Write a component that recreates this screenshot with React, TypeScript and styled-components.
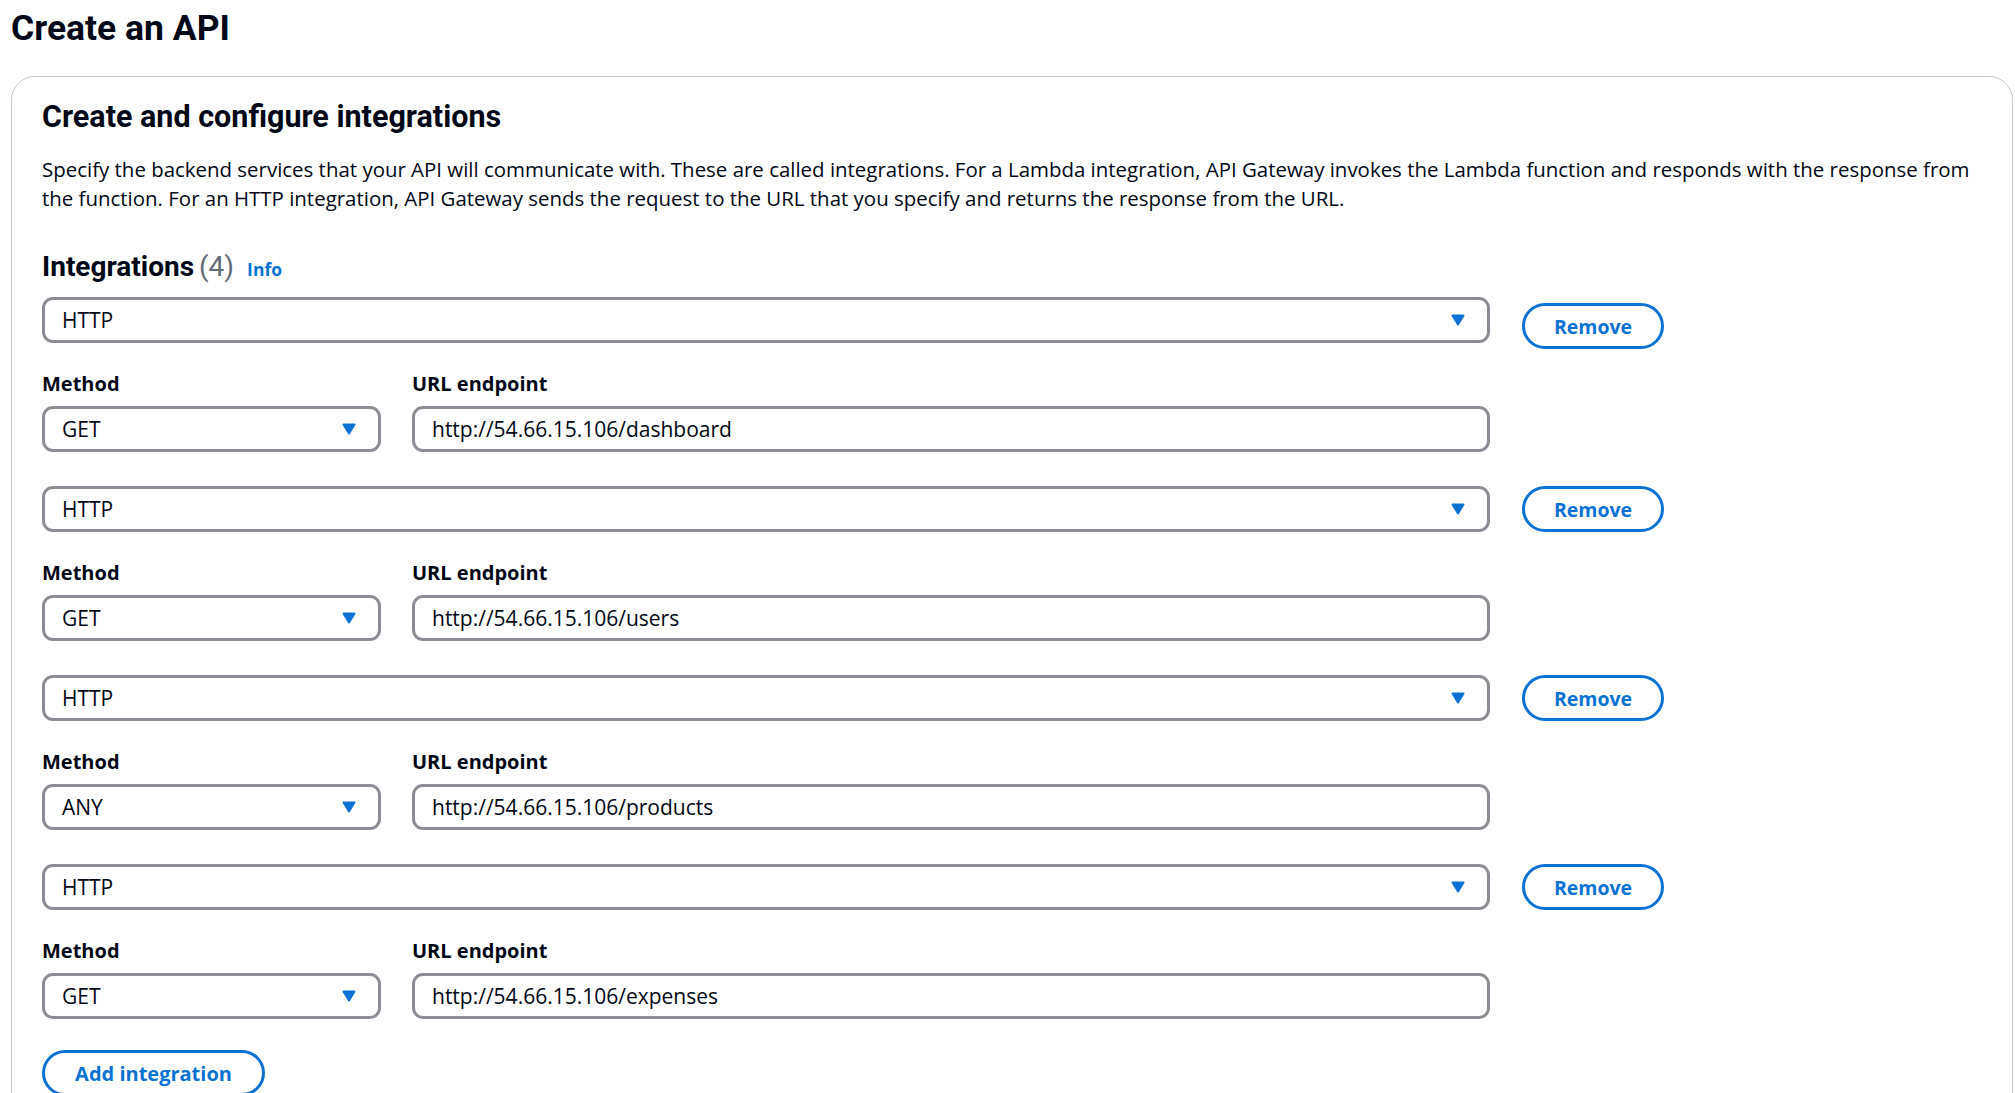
import React from "react";
import styled, { createGlobalStyle } from "styled-components";

const HEADING_FONT = `Roboto, "Liberation Sans", Arial, sans-serif`;
const BODY_FONT = `"Open Sans", "Noto Sans", "Liberation Sans", Arial, sans-serif`;

const GlobalStyle = createGlobalStyle`
  html, body {
    margin: 0;
    padding: 0;
    background: #ffffff;
    overflow: hidden;
  }
  body {
    font-family: ${BODY_FONT};
    color: #000716;
    -webkit-font-smoothing: antialiased;
  }
  * { box-sizing: border-box; }
`;

const Page = styled.div`
  padding: 7px 2px 0 11px;
`;

const Title = styled.h1`
  margin: 0 0 26px 0;
  font-family: ${HEADING_FONT};
  font-size: 35.5px;
  line-height: 43px;
  font-weight: 700;
  color: #000716;
`;

const Card = styled.section`
  border: 1px solid #c6c6cd;
  border-radius: 24px;
  padding: 23px 30px 60px 30px;
  background: #ffffff;
`;

const CardHeading = styled.h2`
  margin: 0;
  font-family: ${HEADING_FONT};
  font-size: 30.5px;
  line-height: 34px;
  font-weight: 700;
  color: #000716;
`;

const Description = styled.p`
  margin: 21px 0 0 0;
  font-size: 20.45px;
  line-height: 28.5px;
  white-space: nowrap;
  color: #000716;
`;

const SectionHeader = styled.div`
  margin-top: 39px;
  display: flex;
  align-items: baseline;
  height: 32px;
  line-height: 32px;
`;

const SectionTitle = styled.h3`
  margin: 0;
  font-family: ${HEADING_FONT};
  font-size: 28px;
  font-weight: 700;
  color: #000716;
`;

const Count = styled.span`
  margin-left: 5px;
  font-family: ${HEADING_FONT};
  font-size: 28px;
  font-weight: 400;
  color: #5f6b7a;
`;

const InfoLink = styled.a`
  margin-left: 13px;
  font-size: 17.5px;
  font-weight: 700;
  color: #0972d3;
  text-decoration: none;
`;

const IntegrationList = styled.div`
  margin-top: 14px;
  display: flex;
  flex-direction: column;
  gap: 34px;
`;

const Group = styled.div`
  display: flex;
  flex-direction: column;
  gap: 25px;
`;

const TypeRow = styled.div`
  height: 46px;
  display: flex;
  align-items: flex-start;
  gap: 32px;
`;

const FieldsRow = styled.div`
  width: 1448px;
  display: grid;
  grid-template-columns: 339px 1fr;
  column-gap: 31px;
`;

const Field = styled.div`
  display: flex;
  flex-direction: column;
`;

const Label = styled.label`
  font-size: 20px;
  line-height: 31px;
  font-weight: 700;
  margin-bottom: 7px;
  color: #000716;
`;

const SelectBox = styled.div<{ $width?: string }>`
  width: ${(p) => p.$width || "100%"};
  height: 46px;
  border: 3px solid #8c8c94;
  border-radius: 11px;
  background: #ffffff;
  display: flex;
  align-items: center;
  justify-content: space-between;
  padding: 0 22px 0 17px;
  font-size: 21px;
  color: #000716;
`;

const TextInput = styled.div`
  height: 46px;
  border: 3px solid #8c8c94;
  border-radius: 11px;
  background: #ffffff;
  display: flex;
  align-items: center;
  padding: 0 17px;
  font-size: 21px;
  color: #000716;
`;

const PillButton = styled.button<{ $width: number; $offset?: number }>`
  width: ${(p) => p.$width}px;
  height: 46px;
  margin-top: ${(p) => p.$offset || 0}px;
  flex-shrink: 0;
  border: 3px solid #0972d3;
  border-radius: 23px;
  background: #ffffff;
  color: #0972d3;
  font-family: ${BODY_FONT};
  font-size: 19.5px;
  font-weight: 700;
  padding: 0;
  cursor: pointer;
`;

const AddButton = styled(PillButton)`
  margin-top: 31px;
  font-size: 20px;
`;

const Caret = () => (
  <svg width="14" height="12" viewBox="0 0 14 12" aria-hidden="true">
    <path
      d="M1.5 1.5h11L7 10.5z"
      fill="#0972d3"
      stroke="#0972d3"
      strokeWidth="2"
      strokeLinejoin="round"
    />
  </svg>
);

type Integration = { method: string; url: string };

const integrations: Integration[] = [
  { method: "GET", url: "http://54.66.15.106/dashboard" },
  { method: "GET", url: "http://54.66.15.106/users" },
  { method: "ANY", url: "http://54.66.15.106/products" },
  { method: "GET", url: "http://54.66.15.106/expenses" },
];

export default function App() {
  return (
    <>
      <GlobalStyle />
      <Page>
        <Title>Create an API</Title>
        <Card>
          <CardHeading>Create and configure integrations</CardHeading>
          <Description>
            Specify the backend services that your API will communicate with. These are called integrations. For a Lambda integration, API Gateway invokes the Lambda function and responds with the response from
            <br />
            the function. For an HTTP integration, API Gateway sends the request to the URL that you specify and returns the response from the URL.
          </Description>
          <SectionHeader>
            <SectionTitle>Integrations</SectionTitle>
            <Count>(4)</Count>
            <InfoLink href="#">Info</InfoLink>
          </SectionHeader>
          <IntegrationList>
            {integrations.map((it, i) => (
              <Group key={i}>
                <TypeRow>
                  <SelectBox $width="1448px">
                    <span>HTTP</span>
                    <Caret />
                  </SelectBox>
                  <PillButton $width={142} $offset={i === 0 ? 6 : 0}>
                    Remove
                  </PillButton>
                </TypeRow>
                <FieldsRow>
                  <Field>
                    <Label>Method</Label>
                    <SelectBox>
                      <span>{it.method}</span>
                      <Caret />
                    </SelectBox>
                  </Field>
                  <Field>
                    <Label>URL endpoint</Label>
                    <TextInput>{it.url}</TextInput>
                  </Field>
                </FieldsRow>
              </Group>
            ))}
          </IntegrationList>
          <AddButton $width={223}>Add integration</AddButton>
        </Card>
      </Page>
    </>
  );
}
